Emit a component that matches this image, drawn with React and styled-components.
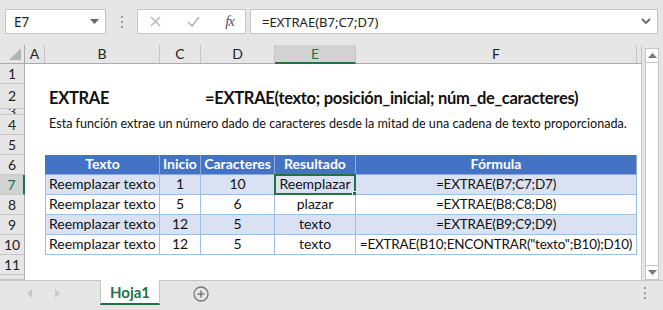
import React from 'react'
import styled, { createGlobalStyle, css } from 'styled-components'

const GlobalStyle = createGlobalStyle`
  html, body {
    margin: 0;
    padding: 0;
  }
  body {
    width: 663px;
    height: 310px;
    overflow: hidden;
    background: #e6e6e6;
    font-family: Lato, "Liberation Sans", sans-serif;
  }
`

const GREEN = '#217346'
const COLS = '25px 20px 115px 41px 74px 81px 281px 5px'

const Window = styled.div`
  display: flex;
  flex-direction: column;
  width: 663px;
  height: 310px;
`

const FormulaBar = styled.div`
  display: flex;
  align-items: flex-start;
  height: 45px;
  padding: 9px 0 0 5px;
  box-sizing: border-box;
`

const Box = styled.div`
  display: flex;
  align-items: center;
  height: 25px;
  box-sizing: border-box;
  background: #fff;
  border: 1px solid #c6c6c6;
`

const NameBox = styled(Box)`
  width: 101px;
  padding: 0 6px 0 8px;
  justify-content: space-between;
  font-family: "Noto Sans", "Open Sans", sans-serif;
  font-size: 13.5px;
  color: #222;
`

const Grip = styled.div`
  width: 31px;
  height: 25px;
  display: flex;
  align-items: center;
  justify-content: center;
`

const FxBox = styled(Box)`
  width: 109px;
  padding: 0 6px 0 12px;
  justify-content: space-between;
`

const Fx = styled.span`
  font-family: "Liberation Serif", serif;
  font-style: italic;
  font-size: 15px;
  color: #555;
  letter-spacing: -1px;
  margin-right: 5px;
`

const FormulaInput = styled(Box)`
  width: 408px;
  margin-left: 4px;
  padding: 0 6px 0 11px;
  justify-content: space-between;
  font-family: "Noto Sans", "Open Sans", sans-serif;
  font-size: 13px;
  color: #222;
`

const Main = styled.div`
  display: flex;
  height: 235px;
`

const Sheet = styled.div`
  display: grid;
  grid-template-columns: ${COLS};
  grid-template-rows: 19px 20px 25px 6px repeat(8, 20px) 5px;
  width: 642px;
  background: #fff;
  border-right: 1px solid #c6c6c6;
  box-sizing: border-box;
  font-size: 14px;
  color: #111;
`

const Corner = styled.div`
  background: #e6e6e6;
  border-right: 1px solid #ababab;
  border-bottom: 1px solid #ababab;
  display: flex;
  align-items: flex-end;
  justify-content: flex-end;
  padding: 0 3px 3px 0;
`

const ColHead = styled.div`
  background: ${p => (p.$active ? '#d2d2d2' : '#e6e6e6')};
  border-right: 1px solid #c6c6c6;
  border-bottom: ${p => (p.$active ? `2px solid ${GREEN}` : '1px solid #ababab')};
  color: ${p => (p.$active ? GREEN : '#222')};
  display: flex;
  align-items: center;
  justify-content: center;
  font-size: 14px;
  line-height: 1;
`

const RowHead = styled.div`
  grid-column: 1;
  background: ${p => (p.$active ? '#d2d2d2' : '#e6e6e6')};
  border-right: ${p => (p.$active ? `2px solid ${GREEN}` : '1px solid #ababab')};
  border-bottom: 1px solid #c6c6c6;
  color: ${p => (p.$active ? GREEN : '#222')};
  display: flex;
  align-items: center;
  justify-content: center;
  overflow: hidden;
  font-size: 14px;
  line-height: 1;
  box-sizing: border-box;
`

const Cell = styled.div`
  grid-column: ${p => p.$col || 'auto'};
  display: flex;
  align-items: flex-end;
  justify-content: ${p => (p.$center ? 'center' : 'flex-start')};
  padding: 0 2px 1px 4px;
  white-space: nowrap;
  overflow: visible;
  line-height: 18px;
  box-sizing: border-box;
`

const Title = styled(Cell)`
  font-weight: 700;
  font-size: 16.5px;
  letter-spacing: -0.3px;
  padding-bottom: 2px;
`

const Note = styled(Cell)`
  font-size: 12.6px;
  padding-bottom: 2px;
`

const TCell = styled(Cell)`
  position: relative;
  border-right: 1px solid #9bc2e6;
  border-bottom: 1px solid #9bc2e6;
  ${p => p.$first && css`border-left: 1px solid #9bc2e6;`}
  background: ${p => (p.$band ? '#d9e1f2' : '#fff')};
  ${p => p.$head && css`
    background: #4472c4;
    color: #fff;
    font-weight: 700;
    border-right-color: #8eaadb;
    border-bottom-color: #8eaadb;
    ${p.$first && css`border-left-color: #4472c4;`}
  `}
  ${p => p.$formula && css`
    font-size: 13.5px;
    letter-spacing: -0.2px;
  `}
  padding-left: ${p => (p.$center ? '1px' : '3px')};
  padding-right: 1px;
`

const Selection = styled.div`
  position: absolute;
  inset: -1px -1px -1px -1px;
  border: 2px solid ${GREEN};
  pointer-events: none;
  &::after {
    content: '';
    position: absolute;
    right: -5px;
    bottom: -5px;
    width: 5px;
    height: 5px;
    background: ${GREEN};
    border: 1px solid #fff;
  }
`

const Side = styled.div`
  width: 21px;
  padding: 3px 4px 0 3px;
  box-sizing: border-box;
`

const ScrollBar = styled.div`
  width: 14px;
  height: 232px;
  background: #fff;
  border: 1px solid #c6c6c6;
  box-sizing: border-box;
  display: flex;
  flex-direction: column;
  justify-content: space-between;
`

const ScrollArrow = styled.div`
  height: 13px;
  display: flex;
  align-items: center;
  justify-content: center;
  border-${p => (p.$down ? 'top' : 'bottom')}: 1px solid #c6c6c6;
`

const TabBar = styled.div`
  display: flex;
  align-items: flex-start;
  height: 30px;
  border-top: 1px solid #c6c6c6;
  box-sizing: border-box;
`

const NavArrows = styled.div`
  width: 100px;
  height: 24px;
  display: flex;
  align-items: center;
  gap: 23px;
  padding-left: 27px;
  box-sizing: border-box;
`

const Tab = styled.div`
  width: 60px;
  height: 25px;
  margin-top: -1px;
  background: #fff;
  border-left: 1px solid #c6c6c6;
  border-right: 1px solid #c6c6c6;
  border-bottom: 2px solid ${GREEN};
  box-sizing: border-box;
  display: flex;
  align-items: center;
  justify-content: center;
  color: ${GREEN};
  font-weight: 700;
  font-size: 15px;
`

const AddSheet = styled.div`
  margin: 5px 0 0 33px;
  display: flex;
`

const TabGrip = styled.div`
  margin: 6px 0 0 auto;
  width: 36px;
  display: flex;
  justify-content: center;
`

const Dots = () => (
  <svg width="4" height="12" viewBox="0 0 4 12">
    <rect x="1" y="0" width="2" height="2" fill="#9a9a9a" />
    <rect x="1" y="5" width="2" height="2" fill="#9a9a9a" />
    <rect x="1" y="10" width="2" height="2" fill="#9a9a9a" />
  </svg>
)

const rows = [
  ['Reemplazar texto', '1', '10', 'Reemplazar', '=EXTRAE(B7;C7;D7)'],
  ['Reemplazar texto', '5', '6', 'plazar', '=EXTRAE(B8;C8;D8)'],
  ['Reemplazar texto', '12', '5', 'texto', '=EXTRAE(B9;C9;D9)'],
  ['Reemplazar texto', '12', '5', 'texto', '=EXTRAE(B10;ENCONTRAR("texto";B10);D10)'],
]

const heads = ['Texto', 'Inicio', 'Caracteres', 'Resultado', 'Fórmula']

export default function App() {
  return (
    <Window>
      <GlobalStyle />
      <FormulaBar>
        <NameBox>
          <span>E7</span>
          <svg width="9" height="5" viewBox="0 0 9 5"><path d="M0 0h9L4.5 5z" fill="#666" /></svg>
        </NameBox>
        <Grip><Dots /></Grip>
        <FxBox>
          <svg width="11" height="11" viewBox="0 0 11 11">
            <path d="M1 1l9 9M10 1l-9 9" stroke="#b4b4b4" strokeWidth="1.4" />
          </svg>
          <svg width="13" height="11" viewBox="0 0 13 11">
            <path d="M1 6l4 4 7-9" stroke="#b4b4b4" strokeWidth="1.6" fill="none" />
          </svg>
          <Fx>fx</Fx>
        </FxBox>
        <FormulaInput>
          <span>=EXTRAE(B7;C7;D7)</span>
          <svg width="10" height="7" viewBox="0 0 10 7">
            <path d="M1 1l4 4 4-4" stroke="#666" strokeWidth="1.8" fill="none" />
          </svg>
        </FormulaInput>
      </FormulaBar>

      <Main>
        <Sheet>
          <Corner>
            <svg width="12" height="12" viewBox="0 0 12 12"><path d="M12 0v12H0z" fill="#b4b4b4" /></svg>
          </Corner>
          {['A', 'B', 'C', 'D', 'E', 'F', ''].map(c => (
            <ColHead key={c || 'g'} $active={c === 'E'}>{c}</ColHead>
          ))}

          <RowHead>1</RowHead>
          <Cell $col="2 / -1" />

          <RowHead>2</RowHead>
          <Cell />
          <Title $col="3 / 5">EXTRAE</Title>
          <Title $col="5 / -1">=EXTRAE(texto; posición_inicial; núm_de_caracteres)</Title>

          <RowHead>3</RowHead>
          <Cell $col="2 / -1" />

          <RowHead>4</RowHead>
          <Cell />
          <Note $col="3 / -1">Esta función extrae un número dado de caracteres desde la mitad de una cadena de texto proporcionada.</Note>

          <RowHead>5</RowHead>
          <Cell $col="2 / -1" />

          <RowHead>6</RowHead>
          <Cell />
          {heads.map((h, i) => (
            <TCell key={h} $head $center $first={i === 0}>{h}</TCell>
          ))}
          <Cell />

          {rows.map((r, ri) => (
            <React.Fragment key={ri}>
              <RowHead $active={ri === 0}>{7 + ri}</RowHead>
              <Cell />
              {r.map((v, ci) => (
                <TCell key={ci} $band={ri % 2 === 0} $center={ci > 0} $first={ci === 0} $formula={ci === 4}>
                  {v}
                  {ri === 0 && ci === 3 && <Selection />}
                </TCell>
              ))}
              <Cell />
            </React.Fragment>
          ))}

          <RowHead>11</RowHead>
          <Cell $col="2 / -1" />

          <RowHead />
          <Cell $col="2 / -1" />
        </Sheet>

        <Side>
          <ScrollBar>
            <ScrollArrow>
              <svg width="9" height="5" viewBox="0 0 9 5"><path d="M0 5h9L4.5 0z" fill="#777" /></svg>
            </ScrollArrow>
            <ScrollArrow $down>
              <svg width="9" height="5" viewBox="0 0 9 5"><path d="M0 0h9L4.5 5z" fill="#777" /></svg>
            </ScrollArrow>
          </ScrollBar>
        </Side>
      </Main>

      <TabBar>
        <NavArrows>
          <svg width="5" height="9" viewBox="0 0 5 9"><path d="M5 0v9L0 4.5z" fill="#c8c8c8" /></svg>
          <svg width="5" height="9" viewBox="0 0 5 9"><path d="M0 0v9L5 4.5z" fill="#c8c8c8" /></svg>
        </NavArrows>
        <Tab>Hoja1</Tab>
        <AddSheet>
          <svg width="16" height="16" viewBox="0 0 16 16">
            <circle cx="8" cy="8" r="7" stroke="#777" strokeWidth="1.3" fill="none" />
            <path d="M8 4.5v7M4.5 8h7" stroke="#777" strokeWidth="1.5" />
          </svg>
        </AddSheet>
        <TabGrip><Dots /></TabGrip>
      </TabBar>
    </Window>
  )
}
